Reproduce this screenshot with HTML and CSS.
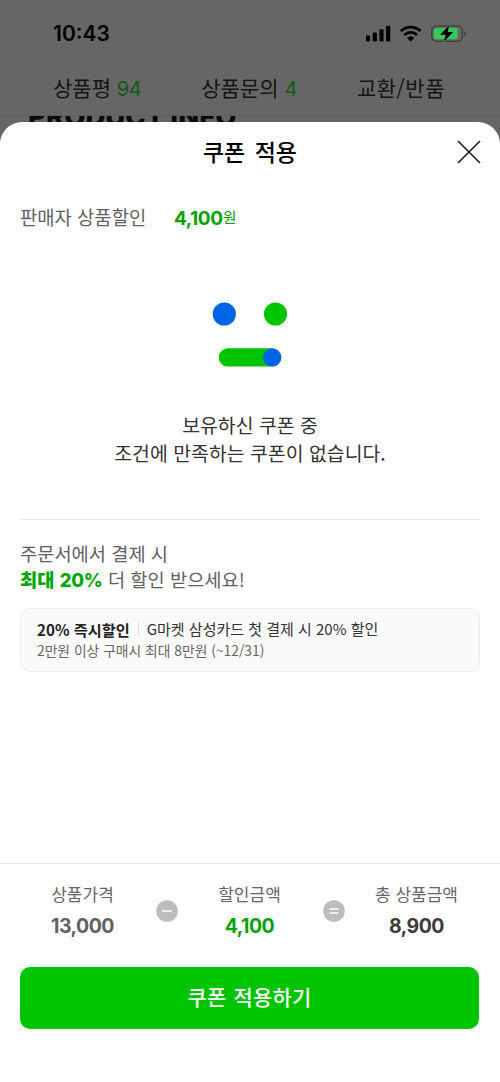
FILE: index.html
```html
<!DOCTYPE html>
<html lang="ko">
<head>
<meta charset="utf-8">
<meta name="viewport" content="width=device-width, initial-scale=1">
<title>쿠폰 적용</title>
<link rel="stylesheet" href="styles.css">
</head>
<body>
<div class="screen">
  <header class="backdrop">
    <div class="status">
      <span class="time">10:43</span>
      <svg class="status-icons" width="104" height="20" viewBox="0 0 104 20">
        <g fill="#000">
          <rect x="2" y="11.500" width="4" height="6" rx="1.200"/>
          <rect x="8.700" y="8.500" width="4.200" height="9" rx="1.200"/>
          <rect x="15.400" y="5.200" width="4.200" height="12.300" rx="1.200"/>
          <rect x="22.100" y="1.800" width="4.200" height="15.700" rx="1.200"/>
        </g>
        <g fill="none" stroke="#000" stroke-width="2.700">
          <path d="M36.800 7a14.400 14.400 0 0 1 19.800 0"/>
          <path d="M40.400 10.900a9.200 9.200 0 0 1 12.600 0"/>
        </g>
        <path d="M43.100 13.900a5.400 5.400 0 0 1 7.200 0L46.700 17.600Z" fill="#000"/>
        <rect x="67.700" y="1.900" width="30.800" height="15.400" rx="5" fill="none" stroke="#3c3c3c" stroke-width="1.300"/>
        <rect x="69.700" y="3.900" width="24" height="11.400" rx="3" fill="#36c759"/>
        <path d="M100.100 7.200v5c2-.7 2-4.300 0-5Z" fill="#3c3c3c"/>
        <path d="M85.200 1L76.200 10.800h5.600L79.500 18 89.200 7.900h-5.500Z" fill="#000" stroke="#36c759" stroke-width="1" paint-order="stroke"/>
      </svg>
    </div>
    <nav class="tabs">
      <span class="tab">상품평 <b>94</b></span>
      <span class="tab">상품문의 <b>4</b></span>
      <span class="tab returns">교환/반품</span>
    </nav>
    <div class="peek"><span>PRODUCT INFO</span></div>
  </header>

  <main class="sheet">
    <div class="sheet-head">
      <h1>쿠폰 적용</h1>
      <svg class="close" width="24" height="24" viewBox="0 0 24 24"><path d="M1 1L23 23M23 1L1 23" stroke="#222" stroke-width="1.700" fill="none"/></svg>
    </div>
    <div class="seller">
      <span class="seller-label">판매자 상품할인</span>
      <span class="seller-price"><b>4,100</b><span>원</span></span>
    </div>
    <section class="empty">
      <svg width="76" height="66" viewBox="0 0 76 66">
        <circle cx="12.300" cy="12" r="11.600" fill="#0064e6"/>
        <circle cx="63.500" cy="12" r="11.600" fill="#00c400"/>
        <rect x="6.700" y="46.200" width="62" height="18.400" rx="9.200" fill="#00c400"/>
        <circle cx="60.200" cy="55.400" r="9.200" fill="#0064e6"/>
      </svg>
      <p>보유하신 쿠폰 중<br>조건에 만족하는 쿠폰이 없습니다.</p>
    </section>
    <section class="promo">
      <p class="promo-title">주문서에서 결제 시<br><b>최대 <span class="rate">20%</span></b> 더 할인 받으세요!</p>
      <div class="card">
        <div class="card-main"><b>20% 즉시할인</b><i class="bar"></i><span>G마켓 삼성카드 첫 결제 시 20% 할인</span></div>
        <div class="card-sub">2만원 이상 구매시 최대 8만원 (~12/31)</div>
      </div>
    </section>
    <footer class="footer">
      <div class="sum">
        <div class="cell"><span>상품가격</span><b class="base">13,000</b></div>
        <svg class="op" width="22" height="22" viewBox="0 0 22 22"><circle cx="11" cy="11" r="10.800" fill="#bdbdbd"/><path d="M6 11h10" stroke="#fff" stroke-width="1.500"/></svg>
        <div class="cell"><span>할인금액</span><b class="off">4,100</b></div>
        <svg class="op" width="22" height="22" viewBox="0 0 22 22"><circle cx="11" cy="11" r="10.800" fill="#bdbdbd"/><path d="M6.500 9h9M6.500 13h9" stroke="#fff" stroke-width="1.500"/></svg>
        <div class="cell"><span>총 상품금액</span><b class="total">8,900</b></div>
      </div>
      <button class="apply" type="button">쿠폰 적용하기</button>
    </footer>
  </main>
</div>
</body>
</html>
```
FILE: styles.css
```css
* { box-sizing: border-box; }
body { margin: 0; background: #666; font-family: "Noto Sans CJK KR", sans-serif; }
h1, p { margin: 0; }
.screen { width: 500px; height: 1082px; overflow: hidden; display: flex; flex-direction: column; background: #666; }

.backdrop { height: 122px; flex: none; }
.status { height: 60px; padding: 0 32px 0 53px; display: flex; justify-content: space-between; }
.time { font: 600 21px/26px Inter, sans-serif; color: #000; padding-top: 21px; }
.status-icons { margin-top: 24px; }
.tabs { height: 56px; display: flex; justify-content: space-between; padding: 12px 55px 0 53px; border-bottom: 1px solid #5f5f5f; font-size: 21px; line-height: 30px; color: #141414; white-space: nowrap; }
.tab b { font: 400 20px/28px Inter, sans-serif; letter-spacing: -.5px; color: #0f5a16; }
.returns { letter-spacing: .5px; }
.peek { height: 6px; overflow: hidden; padding-left: 28px; font: 800 27.500px/28px Inter, sans-serif; color: #0a0a0a; }
.peek span { display: block; margin-top: -14px; white-space: nowrap; }

.sheet { flex: 1; background: #fff; border-radius: 22px 22px 0 0; display: flex; flex-direction: column; }
.sheet-head { height: 60px; display: grid; grid-template-columns: 1fr auto 1fr; align-items: center; padding: 0 19px; }
.sheet-head h1 { grid-column: 2; font-size: 23px; line-height: 34px; font-weight: 500; color: #000; word-spacing: 3px; padding-bottom: 2px; }
.close { justify-self: end; }
.seller { height: 70px; display: flex; align-items: center; padding-left: 20px; }
.seller-label { width: 154px; font-size: 18.800px; color: #616161; padding-bottom: 2px; }
.seller-price { display: flex; align-items: center; font-size: 15px; line-height: 26px; color: #00a400; }
.seller-price b { font: 700 19px/26px Inter, sans-serif; letter-spacing: -.4px; padding-top: 3px; }

.empty { height: 268px; margin: 0 20px; padding-top: 50px; display: flex; flex-direction: column; align-items: center; border-bottom: 1px solid #e9e9e9; }
.empty p { margin-top: 43px; font-size: 19.400px; line-height: 28px; color: #333; text-align: center; }
.promo { flex: 1; padding: 20px 20px 0; }
.promo-title { font-size: 18.700px; line-height: 26px; color: #616161; }
.promo-title b { color: #00a800; font-weight: 800; }
.rate { font: 800 18.500px/24px Inter, sans-serif; letter-spacing: -.2px; }
.card { height: 64px; margin-top: 16px; padding: 8px 16px; border: 1px solid #ececec; border-radius: 10px; background: #fafafa; }
.card-main { display: flex; align-items: center; height: 23px; font-size: 15.200px; color: #333; }
.card-main b { font-weight: 700; color: #222; }
.card-main span { font-size: 15px; }
.bar { width: 1px; height: 13px; margin: 0 8px; background: #ddd; }
.card-sub { font-size: 13.800px; line-height: 20px; color: #666; }

.footer { height: 219px; border-top: 1px solid #e9e9e9; padding: 17px 20px 0; }
.sum { height: 86px; display: grid; grid-template-columns: 125px 43px 123px 45px 121px; }
.cell { display: flex; flex-direction: column; align-items: center; white-space: nowrap; }
.cell span { font-size: 17px; line-height: 26px; color: #666; }
.cell b { margin-top: 6px; font: 700 19.500px/26px Inter, sans-serif; letter-spacing: -.5px; }
.base { color: #616161; }
.off { color: #00a400; }
.total { color: #3c3c3c; }
.op { margin: 19px 0 0 1px; justify-self: center; }
.apply { display: block; width: 459px; height: 62px; border: 0; border-radius: 10px; background: #00c400; color: #fff; font: 500 21px/30px "Noto Sans CJK KR", sans-serif; word-spacing: 1px; letter-spacing: .2px; padding: 0 0 4px; }
```
